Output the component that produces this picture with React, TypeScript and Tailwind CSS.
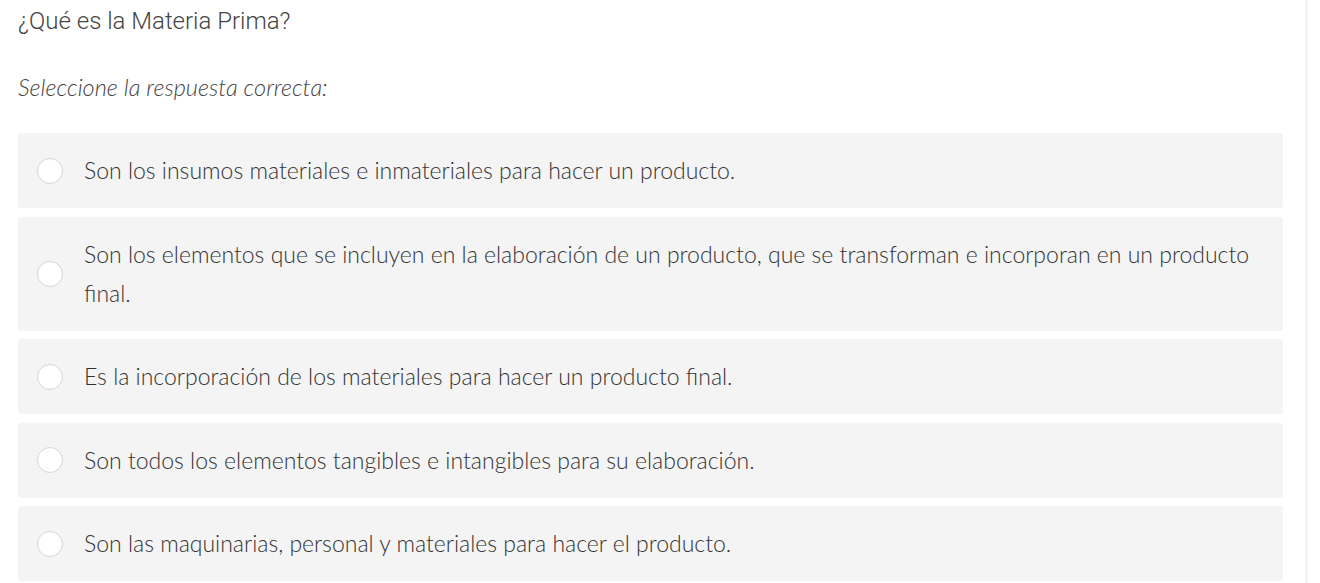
const options = [
  'Son los insumos materiales e inmateriales para hacer un producto.',
  'Son los elementos que se incluyen en la elaboración de un producto, que se transforman e incorporan en un producto final.',
  'Es la incorporación de los materiales para hacer un producto final.',
  'Son todos los elementos tangibles e intangibles para su elaboración.',
  'Son las maquinarias, personal y materiales para hacer el producto.',
]

export default function App() {
  return (
    <div className="h-[583px] w-[1320px] overflow-hidden bg-white">
      <div className="h-full w-[1308px] border-r-[3px] border-[#f4f4f4] pl-[18px] pr-[22px]">
        <h1 className="pt-[6px] font-['Roboto',sans-serif] text-[24px] font-light leading-[30px] text-[#444]">
          ¿Qué es la Materia Prima?
        </h1>
        <p className="mt-[36px] font-['Lato',sans-serif] text-[23.5px] font-light italic leading-[30px] text-[#444]">
          Seleccione la respuesta correcta:
        </p>
        <div className="mt-[31px] flex flex-col gap-[8.5px]">
          {options.map((text) => (
            <label
              key={text}
              className="flex min-h-[75px] items-center gap-[21px] rounded-[3px] bg-[#f4f4f4] py-[18px] pl-[19px] pr-[30px]"
            >
              <span className="h-[26px] w-[26px] shrink-0 rounded-full border border-[#d6d6d6] bg-white" />
              <span className="font-['Lato',sans-serif] text-[23px] font-light leading-[39px] text-[#333]">
                {text}
              </span>
            </label>
          ))}
        </div>
      </div>
    </div>
  )
}
